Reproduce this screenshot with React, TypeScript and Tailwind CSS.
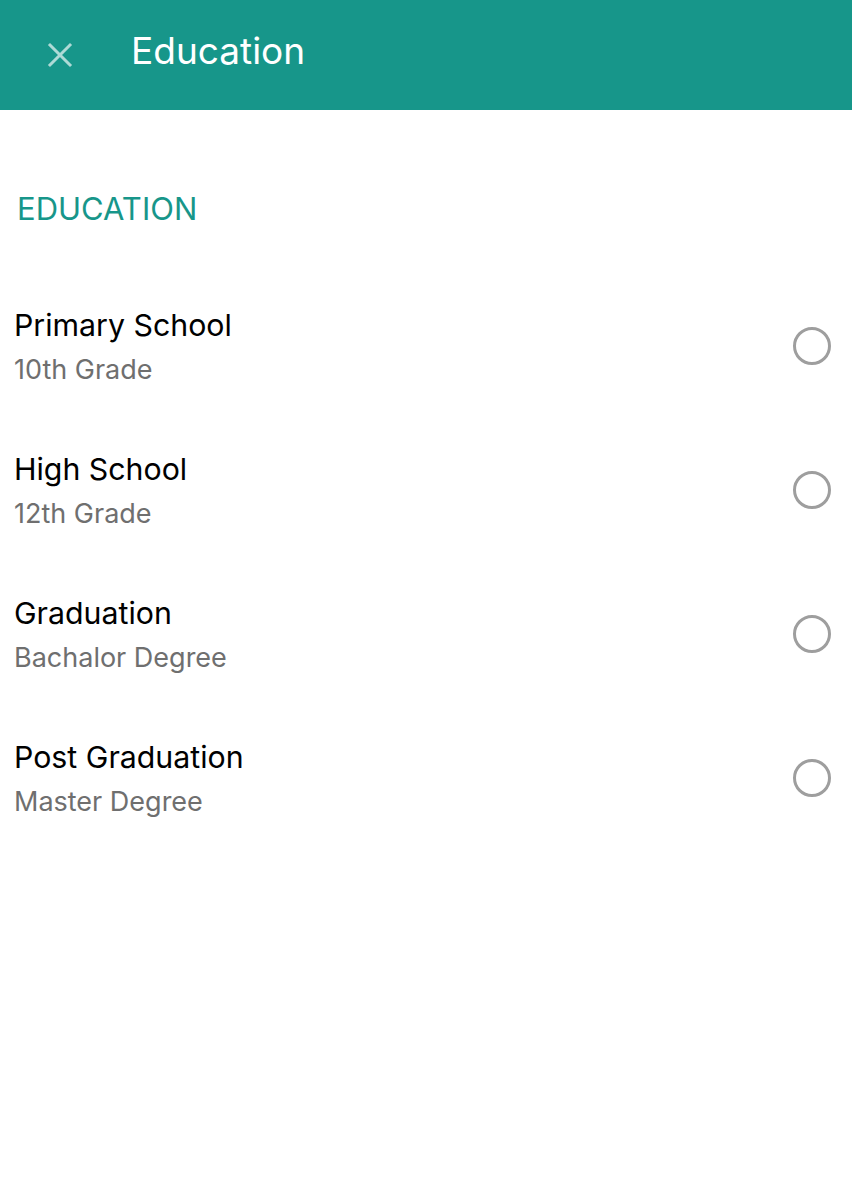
import React from 'react';

const items = [
  { title: 'Primary School', subtitle: '10th Grade' },
  { title: 'High School', subtitle: '12th Grade' },
  { title: 'Graduation', subtitle: 'Bachalor Degree' },
  { title: 'Post Graduation', subtitle: 'Master Degree' },
];

const CloseIcon = () => (
  <svg width="26" height="26" viewBox="0 0 26 26" fill="none">
    <path d="M3 3L23 23M23 3L3 23" stroke="white" strokeOpacity="0.65" strokeWidth="3" strokeLinecap="square" />
  </svg>
);

const App = () => {
  return (
    <div className="min-h-[1188px] w-full bg-white font-['Inter',sans-serif]">
      {/* Toolbar */}
      <header className="flex h-[110px] items-center bg-[#17968a]">
        <div className="ml-[47px] flex h-[26px] w-[26px] items-center justify-center">
          <CloseIcon />
        </div>
        <h1 className="mb-[10px] ml-[58px] text-[37px] leading-none text-white">Education</h1>
      </header>

      {/* Section label */}
      <div className="h-[164px] pl-[17px] pt-[81px]">
        <h2 className="text-[31px] leading-[36px] text-[#17968a]">EDUCATION</h2>
      </div>

      {/* List */}
      <ul>
        {items.map((item) => (
          <li key={item.title} className="flex h-[144px] items-center justify-between pl-[14px] pr-[21px]">
            <div>
              <div className="text-[30.3px] leading-[40px] text-black">{item.title}</div>
              <div className="mt-[7px] text-[27px] leading-[36px] text-[#6f6f6f]">{item.subtitle}</div>
            </div>
            <span className="h-[38px] w-[38px] rounded-full border-[3px] border-[#9e9e9e]" />
          </li>
        ))}
      </ul>
    </div>
  );
};

export default App;
